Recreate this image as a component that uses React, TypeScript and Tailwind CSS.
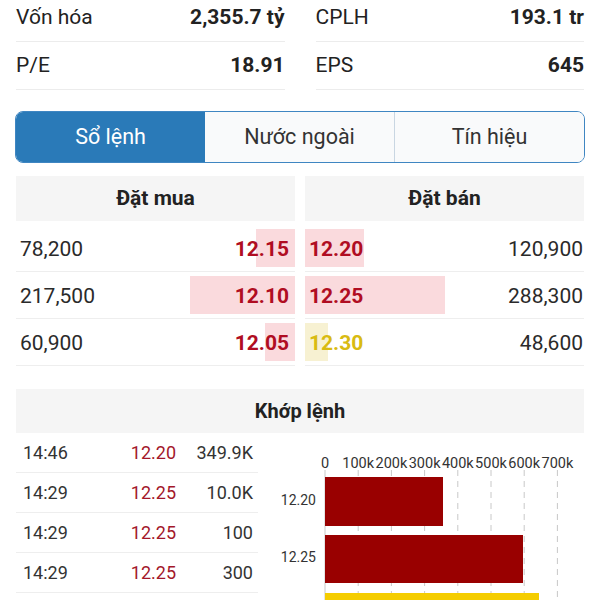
import React from "react";

const stats = [
  [
    ["Vốn hóa", "2,355.7 tỷ"],
    ["P/E", "18.91"],
  ],
  [
    ["CPLH", "193.1 tr"],
    ["EPS", "645"],
  ],
];

const bids = [
  { vol: "78,200", price: "12.15", w: 39 },
  { vol: "217,500", price: "12.10", w: 105 },
  { vol: "60,900", price: "12.05", w: 30 },
];
const asks = [
  { vol: "120,900", price: "12.20", w: 59, y: false },
  { vol: "288,300", price: "12.25", w: 140, y: false },
  { vol: "48,600", price: "12.30", w: 23, y: true },
];

const trades = [
  ["14:46", "12.20", "349.9K"],
  ["14:29", "12.25", "10.0K"],
  ["14:29", "12.25", "100"],
  ["14:29", "12.25", "300"],
];

function Chart() {
  const x0 = 67;
  const step = 33.2;
  const labels = ["0", "100k", "200k", "300k", "400k", "500k", "600k", "700k"];
  return (
    <svg width="342" height="167" viewBox="0 0 342 167" className="block">
      {labels.map((l, i) => (
        <line
          key={"g" + i}
          x1={x0 + i * step}
          x2={x0 + i * step}
          y1={37}
          y2={167}
          stroke="#c8c8c8"
          strokeWidth={1}
          strokeDasharray={i === 0 ? "" : "6 5"}
        />
      ))}
      {labels.map((l, i) => (
        <text
          key={"t" + i}
          x={x0 + i * step}
          y={35}
          textAnchor="middle"
          fontSize={14.5}
          fill="#333"
          fontFamily="Roboto, sans-serif"
        >
          {l}
        </text>
      ))}
      <rect x={x0} y={44} width={118} height={49} fill="#990000" />
      <rect x={x0} y={102} width={198} height={48} fill="#990000" />
      <rect x={x0} y={160} width={214} height={20} fill="#f5cd00" />
      <text x={58} y={72} textAnchor="end" fontSize={14} fill="#333" fontFamily="Roboto, sans-serif">
        12.20
      </text>
      <text x={58} y={129} textAnchor="end" fontSize={14} fill="#333" fontFamily="Roboto, sans-serif">
        12.25
      </text>
    </svg>
  );
}

export default function App() {
  return (
    <div
      className="w-[600px] h-[600px] overflow-hidden bg-white text-[#222]"
      style={{ fontFamily: "Roboto, 'Noto Sans', sans-serif" }}
    >
      {/* Stats */}
      <div className="-mt-[6px] grid grid-cols-2 gap-x-[31px] px-4">
        {stats.map((col, ci) => (
          <div key={ci}>
            {col.map(([k, v]) => (
              <div
                key={k}
                className="flex h-[48px] items-center justify-between border-b border-[#ececec] text-[21px]"
              >
                <span>{k}</span>
                <span className="font-bold">{v}</span>
              </div>
            ))}
          </div>
        ))}
      </div>

      {/* Tabs */}
      <div className="mx-[15px] mt-[21px] flex h-[52px] overflow-hidden rounded-[8px] border border-[#3f86c2] text-[21.5px]">
        <div className="flex flex-1 items-center justify-center bg-[#2a7ab8] text-white">Sổ lệnh</div>
        <div className="flex flex-1 items-center justify-center border-r border-[#c9d6e2] bg-[#f9fafb] text-[#333]">
          Nước ngoài
        </div>
        <div className="flex flex-1 items-center justify-center bg-[#f9fafb] text-[#333]">Tín hiệu</div>
      </div>

      {/* Order book */}
      <div className="mt-[13px] flex gap-[10px] px-4">
        <div className="flex-1">
          <div className="flex h-[45px] items-center justify-center bg-[#f5f5f5] text-[21px] font-bold">Đặt mua</div>
          <div className="mt-[4px]">
            {bids.map((b) => (
              <div key={b.price} className="flex h-[47px] items-center justify-between border-b border-[#eeeeee] text-[21px]">
                <span className="pl-1 pt-[3px] text-[#2a2a2a]">{b.vol}</span>
                <div className="relative flex h-[38px] items-center">
                  <div className="absolute right-0 top-0 h-full bg-[#fadadd]" style={{ width: b.w }} />
                  <span className="relative pr-[6px] pt-[3px] font-bold text-[#b00d22]">{b.price}</span>
                </div>
              </div>
            ))}
          </div>
        </div>
        <div className="flex-1">
          <div className="flex h-[45px] items-center justify-center bg-[#f5f5f5] text-[21px] font-bold">Đặt bán</div>
          <div className="mt-[4px]">
            {asks.map((a) => (
              <div key={a.price} className="flex h-[47px] items-center justify-between border-b border-[#eeeeee] text-[21px]">
                <div className="relative flex h-[38px] items-center">
                  <div
                    className={"absolute left-0 top-0 h-full " + (a.y ? "bg-[#f7f1d2]" : "bg-[#fadadd]")}
                    style={{ width: a.w }}
                  />
                  <span className={"relative pl-[4px] pt-[3px] font-bold " + (a.y ? "text-[#d9bb12]" : "text-[#b00d22]")}>
                    {a.price}
                  </span>
                </div>
                <span className="pr-[1px] pt-[3px] text-[#2a2a2a]">{a.vol}</span>
              </div>
            ))}
          </div>
        </div>
      </div>

      {/* Khớp lệnh */}
      <div className="mx-4 mt-[23px] flex h-[44px] items-center justify-center bg-[#f5f5f5] text-[20px] font-bold">
        Khớp lệnh
      </div>
      <div className="flex">
        <div className="ml-4 w-[242px]">
          {trades.map((t, i) => (
            <div key={i} className="flex h-[40px] items-center border-b border-[#eeeeee] text-[18px] text-[#333]">
              <span className="w-[100px] pl-[7px]">{t[0]}</span>
              <span className="w-[60px] text-right text-[#a3172a]">{t[1]}</span>
              <span className="flex-1 pr-[5px] text-right">{t[2]}</span>
            </div>
          ))}
        </div>
        <Chart />
      </div>
    </div>
  );
}
